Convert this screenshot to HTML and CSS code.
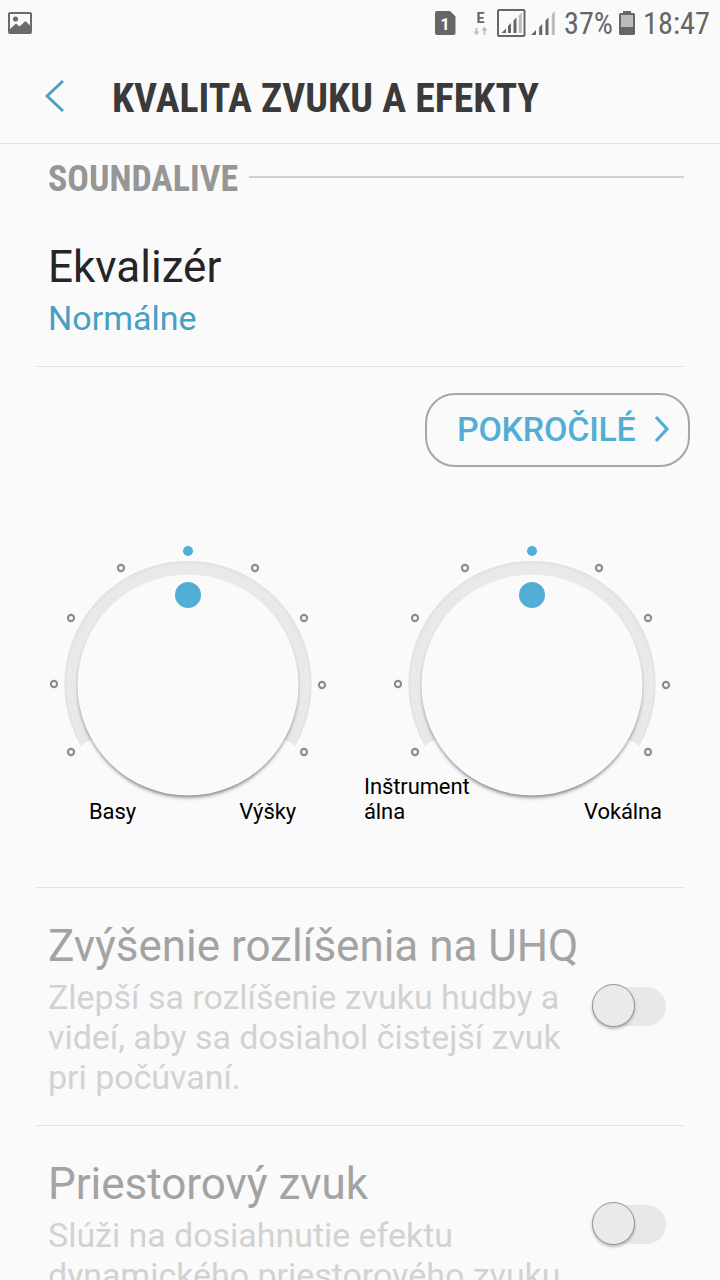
FILE: index.html
```html
<!DOCTYPE html>
<html lang="sk">
<head>
<meta charset="utf-8">
<title>Kvalita zvuku a efekty</title>
<link rel="stylesheet" href="styles.css">
</head>
<body>
<svg class="defs" width="0" height="0" aria-hidden="true">
  <defs>
    <filter id="soft" x="-10%" y="-10%" width="120%" height="120%"><feGaussianBlur stdDeviation="2"/></filter>
    <filter id="edge" x="-10%" y="-10%" width="120%" height="120%"><feGaussianBlur stdDeviation="1.5"/></filter>
    <clipPath id="track"><path d="M150 150L42.6 210.500A123.500 123.500 0 1 1 257.4 210.500Z"/></clipPath>
    <symbol id="dial" viewBox="0 0 300 300">
      <g clip-path="url(#track)">
        <circle cx="150" cy="150" r="124" fill="#e9e9e9"/>
        <circle cx="150" cy="150" r="124.5" fill="none" stroke="#d2d2d2" stroke-width="2" filter="url(#edge)"/>
      </g>
      <circle cx="150" cy="153" r="109" fill="#000" opacity=".58" filter="url(#soft)"/>
      <circle cx="150" cy="150" r="110.5" fill="#fafafa"/>
      <circle cx="150" cy="60" r="13" fill="#52aed5"/>
      <circle cx="150" cy="16" r="5" fill="#52aed5"/>
      <g fill="none" stroke="#8c8c8c" stroke-width="2.100">
        <circle cx="83" cy="33" r="3.1"/><circle cx="217" cy="33" r="3.1"/>
        <circle cx="33" cy="83" r="3.1"/><circle cx="266" cy="83" r="3.1"/>
        <circle cx="16" cy="149" r="3.1"/><circle cx="284" cy="150" r="3.1"/>
        <circle cx="33" cy="217" r="3.1"/><circle cx="266" cy="217" r="3.1"/>
      </g>
    </symbol>
  </defs>
</svg>
<div class="screen">
  <header class="status">
    <svg class="status-photo" width="24" height="22" viewBox="0 0 24 22"><rect x="1" y="1" width="22" height="20" rx="1" fill="none" stroke="#6b6b6b" stroke-width="2"/><circle cx="7.5" cy="7" r="2.6" fill="#6b6b6b"/><path d="M2 17l6-5.5 3.500 3L17.500 9l4.500 4.500V21H2z" fill="#6b6b6b"/></svg>
    <svg class="status-info" width="300" height="48" viewBox="0 0 300 48">
      <path d="M17 11h13l5.500 5.500V33q0 2-2 2H17q-2 0-2-2V13q0-2 2-2z" fill="#666"/>
      <text x="20.500" y="29.500" class="sim">1</text>
      <text x="56.500" y="22.500" class="net" textLength="8" lengthAdjust="spacingAndGlyphs">E</text>
      <path d="M56.500 28v5M64.500 35v-5" stroke="#bbb" stroke-width="1.800"/><path d="M53.500 31.500h6l-3 3.700zM61.500 30.500h6l-3-3.700z" fill="#bbb"/>
      <rect x="78" y="10" width="26.500" height="26" rx="1" fill="none" stroke="#666" stroke-width="2"/>
      <path d="M81.500 33l4.500-4.500V33zM88 26l3-3v10h-3zM93.500 20.500l3-3V33h-3z" fill="#666"/><path d="M98.800 15.500l3-3V33h-3z" fill="#bbb"/>
      <path d="M111 35l5-5v5zM119.200 27l3-3v11h-3zM125.500 20.500l3-3V35h-3z" fill="#666"/><path d="M131.800 14.500l3-3.500v24h-3z" fill="#bbb"/>
      <text x="144" y="34" class="info" textLength="49" lengthAdjust="spacingAndGlyphs">37%</text>
      <path d="M203 11h8v2h2.500q1.500 0 1.500 1.500v19q0 1.500-1.500 1.500h-13q-1.500 0-1.500-1.500v-19q0-1.500 1.500-1.500h2.500z" fill="#666"/><path d="M201 15h12v12h-12z" fill="#bbb"/>
      <text x="223" y="34" class="info" textLength="67" lengthAdjust="spacingAndGlyphs">18:47</text>
    </svg>
  </header>
  <div class="appbar">
    <svg width="22" height="34" viewBox="0 0 22 34"><path d="M18 2L2 17 18 32" fill="none" stroke="#489fc2" stroke-width="2.900"/></svg>
    <svg class="appbar-title" width="480" height="60" viewBox="0 0 480 60"><text x="1" y="40" class="title" textLength="427" lengthAdjust="spacingAndGlyphs">KVALITA ZVUKU A EFEKTY</text></svg>
  </div>
  <main class="content">
    <div class="section">
      <svg width="192" height="44" viewBox="0 0 192 44"><text x="0" y="34" class="section-name" textLength="190" lengthAdjust="spacingAndGlyphs">SOUNDALIVE</text></svg>
      <span class="section-line"></span>
    </div>
    <div class="item equalizer">
      <div class="item-title">Ekvalizér</div>
      <div class="item-value">Normálne</div>
    </div>
    <div class="sound">
      <div class="advanced">
        <span>POKROČILÉ</span>
        <svg width="16" height="28" viewBox="0 0 16 28"><path d="M2 2l11 12L2 26" fill="none" stroke="#52aed5" stroke-width="3.200"/></svg>
      </div>
      <div class="dials">
        <div class="dial">
          <svg width="300" height="300"><use href="#dial"/></svg>
          <div class="labels tone"><span>Basy</span><span>Výšky</span></div>
        </div>
        <div class="dial">
          <svg width="300" height="300"><use href="#dial"/></svg>
          <div class="labels voice"><span>Inštrument<br>álna</span><span>Vokálna</span></div>
        </div>
      </div>
    </div>
    <div class="item toggle-row">
      <div class="item-text">
        <div class="item-title">Zvýšenie rozlíšenia na UHQ</div>
        <div class="item-desc">Zlepší sa rozlíšenie zvuku hudby a<br>videí, aby sa dosiahol čistejší zvuk<br>pri počúvaní.</div>
      </div>
      <div class="switch"><span class="knob"></span></div>
    </div>
    <div class="item toggle-row short">
      <div class="item-text">
        <div class="item-title">Priestorový zvuk</div>
        <div class="item-desc">Slúži na dosiahnutie efektu<br>dynamického priestorového zvuku</div>
      </div>
      <div class="switch"><span class="knob"></span></div>
    </div>
  </main>
</div>
</body>
</html>
```
FILE: styles.css
```css
* { box-sizing: border-box; }
body { margin: 0; background: #fafafa; font-family: Roboto, "Noto Sans", sans-serif; }
svg { display: block; flex: none; }
.defs { position: absolute; }
.screen { width: 720px; height: 1280px; overflow: hidden; display: flex; flex-direction: column; }
.status { height: 48px; flex: none; display: flex; justify-content: space-between; padding-left: 8px; }
.status-photo { margin-top: 12px; }
.sim { font: 700 16px Roboto, sans-serif; fill: #fff; }
.net { font: 700 15px Roboto, sans-serif; fill: #666; }
.info { font: 400 31px "Roboto Condensed", Roboto, sans-serif; fill: #666; }
.appbar { height: 96px; flex: none; display: flex; align-items: flex-start; padding: 24px 0 0 45px; border-bottom: 1px solid #e2e2e2; }
.appbar > svg:first-child { margin-top: 7px; }
.appbar-title { margin-left: 44px; overflow: visible; }
.title { font: 700 41.5px "Roboto Condensed", Roboto, sans-serif; fill: #3a3a3a; }
.section { height: 80px; display: flex; align-items: flex-start; padding: 13px 36px 0 48px; }
.section-name { font: 700 36.500px "Roboto Condensed", Roboto, sans-serif; fill: #969696; }
.section-line { flex: 1; height: 2px; margin: 19px 0 0 9px; background: #d0d0d0; }
.item { margin: 0 36px; padding: 0 12px; border-bottom: 1px solid #e4e4e4; }
.item-title { font-size: 44px; line-height: 52px; letter-spacing: -.03px; white-space: nowrap; }
.equalizer { height: 143px; padding-top: 17px; }
.equalizer .item-title { color: #252525; letter-spacing: 0; }
.item-value { font-size: 34px; line-height: 40px; margin-top: 5px; color: #489fc2; }
.sound { height: 521px; margin: 0 36px; border-bottom: 1px solid #e4e4e4; display: flex; flex-direction: column; }
.advanced { width: 265px; height: 74px; margin: 26px -6px 0 0; align-self: flex-end; display: flex; align-items: center; justify-content: space-between; padding: 0 18px 2px 30px; border: 2px solid #a6a6a6; border-radius: 30px; color: #52aed5; font-size: 34px; font-weight: 500; line-height: 40px; letter-spacing: -.25px; }
.dials { display: flex; gap: 44px; margin-top: 68px; padding-left: 2px; }
.dial { width: 300px; flex: none; }
.labels { display: flex; align-items: flex-end; justify-content: space-between; height: 60px; margin-top: -11px; font-size: 22px; line-height: 25px; color: #000; letter-spacing: -.1px; transform: translateY(-60px); white-space: nowrap; }
.tone { padding: 0 42px 0 51px; }
.voice { margin-left: -18px; padding-right: 20px; }
.toggle-row { display: flex; justify-content: space-between; height: 238px; padding: 32px 18px 0 12px; color: #a3a3a3; }
.item-desc { font-size: 34px; line-height: 40px; margin-top: 5px; color: #d2d2d2; letter-spacing: -.04px; white-space: nowrap; }
.item-text { width: 520px; }
.switch { width: 74px; height: 39px; margin-top: 67px; flex: none; border-radius: 20px; background: #e8e8e8; display: flex; align-items: center; }
.short .switch { margin-top: 47px; }
.knob { width: 43px; height: 43px; flex: none; margin-top: -3px; border: 1px solid #929292; border-radius: 50%; background: #eaeaea; box-shadow: 0 2px 3px rgba(0,0,0,.25); }
```
